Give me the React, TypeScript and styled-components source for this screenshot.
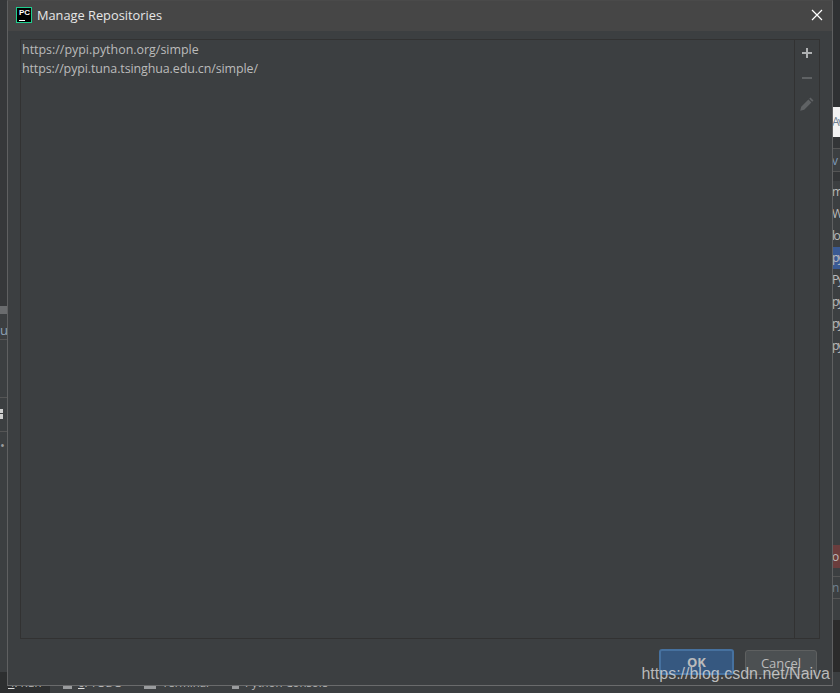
import React from "react";
import styled, { createGlobalStyle } from "styled-components";

const GlobalStyle = createGlobalStyle`
  html, body {
    margin: 0;
    padding: 0;
    background: #3c3f41;
    overflow: hidden;
  }
`;

const Screen = styled.div`
  position: relative;
  width: 840px;
  height: 693px;
  overflow: hidden;
  background: #3c3f41;
  font-family: "Open Sans", "Liberation Sans", sans-serif;
`;

/* ide behind the dialog, only the edges stay visible */
const Ide = styled.div`
  display: grid;
  grid-template-columns: 1fr 1fr;
  grid-template-rows: 672px 21px;
  height: 100%;
`;

const LeftEdge = styled.div`
  display: flex;
  flex-direction: column;
  overflow: hidden;
  background: #3c3f41;
`;

const RightEdge = styled.div`
  display: flex;
  flex-direction: column;
  overflow: hidden;
  background: #3c3f41;
`;

const EdgeRow = styled.div<{ $h: number; $bg?: string; $color?: string; $line?: boolean; $left?: boolean }>`
  flex: none;
  width: 100%;
  height: ${(p) => p.$h}px;
  line-height: ${(p) => p.$h}px;
  background: ${(p) => p.$bg || "transparent"};
  color: ${(p) => p.$color || "#bbbbbb"};
  border-bottom: ${(p) => (p.$line ? "1px solid #555555" : "none")};
  box-sizing: border-box;
  font-size: 13px;
  white-space: nowrap;
  overflow: hidden;
  text-align: ${(p) => (p.$left ? "left" : "right")};
`;

const RowText = styled.span`
  display: inline-block;
  width: 8px;
  text-align: left;
  font-size: 12px;
  letter-spacing: -1.5px;
  overflow: hidden;
`;

const SideMark = styled.div`
  width: 3px;
  height: 10px;
  background: linear-gradient(#d0d0d0 45%, #3c3f41 45%, #3c3f41 55%, #d0d0d0 55%);
`;

const BottomBar = styled.div`
  grid-column: 1 / 3;
  display: flex;
  align-items: flex-start;
  background: #3c3f41;
  font-size: 11.4px;
  color: #bbbbbb;
  line-height: 16px;
`;

const BottomTab = styled.div<{ $active?: boolean; $w: number }>`
  display: flex;
  gap: 6px;
  align-items: center;
  flex: none;
  height: 21px;
  width: ${(p) => p.$w}px;
  padding-left: ${(p) => (p.$active ? 8 : 13)}px;
  box-sizing: border-box;
  background: ${(p) => (p.$active ? "#2d2f30" : "transparent")};
  white-space: nowrap;
  u {
    text-decoration-color: #dddddd;
  }
`;

const TabIcon = styled.span<{ $w: number }>`
  flex: none;
  width: ${(p) => p.$w}px;
  height: 4px;
  margin-top: 8px;
  background: #9a9c9e;
`;

const Dialog = styled.div`
  position: absolute;
  left: 7px;
  top: 0;
  width: 826px;
  height: 686px;
  box-sizing: border-box;
  display: flex;
  flex-direction: column;
  background: #3c3f41;
  border: 1px solid #5f6061;
  border-top-color: #4a4a4a;
  border-bottom-color: #6a6b6c;
`;

const TitleBar = styled.div`
  flex: none;
  height: 30px;
  display: flex;
  align-items: center;
  padding: 0 0 2px 8px;
  box-sizing: border-box;
  gap: 5px;
  background: #464646;
  color: #e6e6e6;
  font-size: 12.8px;
`;

const AppIcon = styled.div`
  flex: none;
  width: 16px;
  height: 16px;
  box-sizing: border-box;
  background: #000000;
  border: 1px solid #1fcf8f;
  position: relative;
  color: #ffffff;
  font: bold 8px/8px "Liberation Sans", sans-serif;
  padding: 1px 0 0 2px;
  &::after {
    content: "";
    position: absolute;
    left: 2px;
    bottom: 1px;
    width: 6px;
    height: 1px;
    background: #ffffff;
  }
`;

const TitleText = styled.div`
  flex: 1;
`;

const CloseButton = styled.div`
  flex: none;
  width: 30px;
  height: 28px;
  display: flex;
  align-items: center;
  justify-content: center;
  color: #ffffff;
`;

const Body = styled.div`
  flex: 1;
  min-height: 0;
  display: flex;
  flex-direction: column;
  padding: 8px 12px 0 12px;
`;

const ListPanel = styled.div`
  height: 600px;
  flex: none;
  display: flex;
  box-sizing: border-box;
  border: 1px solid #323232;
`;

const RepoList = styled.div`
  flex: 1;
  border-right: 1px solid #323232;
`;

const RepoRow = styled.div<{ $tight?: boolean }>`
  height: 19px;
  line-height: 19px;
  padding-left: 1px;
  font-size: 12.45px;
  letter-spacing: ${(p) => (p.$tight ? "-0.1px" : "0")};
  color: #bbbbbb;
`;

const Toolbar = styled.div`
  flex: none;
  width: 24px;
  display: flex;
  flex-direction: column;
  align-items: center;
`;

const ToolButton = styled.div`
  width: 24px;
  height: 25.5px;
  display: flex;
  align-items: center;
  justify-content: center;
`;

const Footer = styled.div`
  flex: 1;
  display: flex;
  justify-content: flex-end;
  align-items: flex-start;
  gap: 11px;
  padding: 11px 3px 0 0;
`;

const DialogButton = styled.div<{ $primary?: boolean }>`
  box-sizing: border-box;
  width: ${(p) => (p.$primary ? 75 : 72)}px;
  height: ${(p) => (p.$primary ? 26 : 25)}px;
  margin-top: ${(p) => (p.$primary ? -1 : 0)}px;
  display: flex;
  align-items: center;
  justify-content: center;
  border-radius: 3px;
  font-size: 13px;
  font-weight: ${(p) => (p.$primary ? 700 : 400)};
  color: #bbbbbb;
  background: ${(p) => (p.$primary ? "#365880" : "#4c5052")};
  border: ${(p) => (p.$primary ? "2px solid #46719f" : "1px solid #5e6060")};
`;

const Watermark = styled.div`
  position: absolute;
  right: 10px;
  top: 664px;
  font: 16px/20px "Liberation Sans", sans-serif;
  color: rgba(222, 222, 222, 0.78);
  white-space: nowrap;
`;

const rightRows = [
  { h: 107, bg: "#2f3133" },
  { h: 30, bg: "#f2f2f2", color: "#6f8191", text: "Av" },
  { h: 12, bg: "#333537", line: true },
  { h: 23, color: "#7f9bbd", text: "v", line: true },
  { h: 9, bg: "#333537" },
  { h: 22, text: "m" },
  { h: 22, text: "W" },
  { h: 22, text: "lo" },
  { h: 22, bg: "#3a5a93", text: "py" },
  { h: 22, text: "Py" },
  { h: 22, text: "py" },
  { h: 22, text: "py" },
  { h: 22, text: "py" },
  { h: 188 },
  { h: 23, bg: "#6b3d3d", text: "o" },
  { h: 9, line: true },
  { h: 22, color: "#6f8191", text: "n", line: true },
  { h: 21 },
  { h: 52, bg: "#2b2b2b" },
];

const leftRows = [
  { h: 306, bg: "#36383a" },
  { h: 8, bg: "#6a6c6e" },
  { h: 9 },
  { h: 14, color: "#8fa3b8", text: "ur" },
  { h: 3, line: true },
  { h: 15 },
  { h: 43, line: true },
  { h: 11 },
  { h: 10, mark: true },
  { h: 13, line: true },
  { h: 8 },
  { h: 10, color: "#9a9c9e", text: "•" },
  { h: 222 },
];

const App = () => {
  return (
    <Screen>
      <GlobalStyle />
      <Ide>
        <LeftEdge>
          {leftRows.map((r, i) => (
            <EdgeRow key={i} $left $h={r.h} $bg={r.bg} $color={r.color} $line={r.line}>
              {r.mark ? <SideMark /> : r.text}
            </EdgeRow>
          ))}
        </LeftEdge>
        <RightEdge>
          {rightRows.map((r, i) => (
            <EdgeRow key={i} $h={r.h} $bg={r.bg} $color={r.color} $line={r.line}>
              {r.text && <RowText>{r.text}</RowText>}
            </EdgeRow>
          ))}
        </RightEdge>
        <BottomBar>
          <BottomTab $active $w={50}>
            <span>
              <u>4</u>: Run
            </span>
          </BottomTab>
          <BottomTab $w={81}>
            <TabIcon $w={9} />
            <span>
              <u>6</u>: TODO
            </span>
          </BottomTab>
          <BottomTab $w={88}>
            <TabIcon $w={12} />
            <span>Terminal</span>
          </BottomTab>
          <BottomTab $w={110}>
            <TabIcon $w={7} />
            <span>Python Console</span>
          </BottomTab>
        </BottomBar>
      </Ide>

      <Dialog>
        <TitleBar>
          <AppIcon>PC</AppIcon>
          <TitleText>Manage Repositories</TitleText>
          <CloseButton>
            <svg width="12" height="12" viewBox="0 0 12 12" fill="none" stroke="#ffffff" strokeWidth="1.2">
              <path d="M1 1 L11 11 M11 1 L1 11" />
            </svg>
          </CloseButton>
        </TitleBar>
        <Body>
          <ListPanel>
            <RepoList>
              <RepoRow>https://pypi.python.org/simple</RepoRow>
              <RepoRow $tight>https://pypi.tuna.tsinghua.edu.cn/simple/</RepoRow>
            </RepoList>
            <Toolbar>
              <ToolButton>
                <svg width="12" height="12" viewBox="0 0 12 12" fill="#afb1b3">
                  <path d="M5 1h2v4h4v2H7v4H5V7H1V5h4z" />
                </svg>
              </ToolButton>
              <ToolButton>
                <svg width="12" height="12" viewBox="0 0 12 12" fill="#5f6264">
                  <path d="M1 5h10v2H1z" />
                </svg>
              </ToolButton>
              <ToolButton>
                <svg width="16" height="16" viewBox="0 0 16 16" fill="#5f6264">
                  <path d="M11.5 1.5l3 3-1.3 1.3-3-3zM9.4 3.6l3 3-7.2 7.2-4 1 1-4z" />
                </svg>
              </ToolButton>
            </Toolbar>
          </ListPanel>
          <Footer>
            <DialogButton $primary>OK</DialogButton>
            <DialogButton>Cancel</DialogButton>
          </Footer>
        </Body>
      </Dialog>

      <Watermark>https://blog.csdn.net/Naiva</Watermark>
    </Screen>
  );
};

export default App;
